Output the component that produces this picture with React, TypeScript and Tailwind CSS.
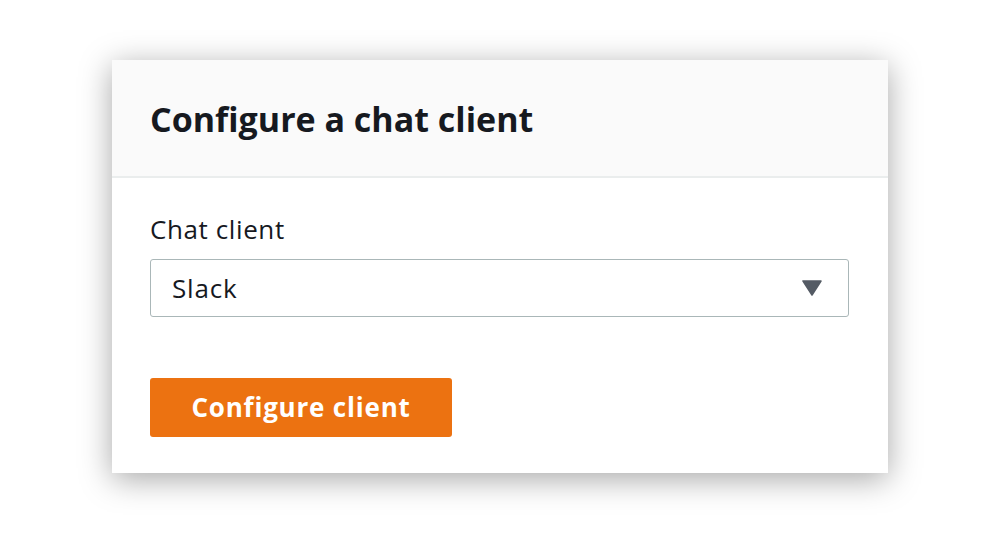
export default function App() {
  return (
    <div className="w-[1000px] h-[534px] bg-white pt-[60px] pl-[112px]" style={{ fontFamily: "'Open Sans', 'Noto Sans', sans-serif" }}>
      <div className="w-[776px] bg-white shadow-[0_6px_30px_rgba(0,0,0,0.35)]">
        <div className="h-[118px] bg-[#fafafa] border-b-2 border-[#eaeded] flex items-center pl-[38px]">
          <h1 className="text-[34px] font-bold text-[#16191f] leading-none pt-[2px]">Configure a chat client</h1>
        </div>
        <div className="px-[38px] pt-[36px] pb-[36px]">
          <div className="text-[26px] text-[#16191f] leading-[30px] tracking-[0.6px]">Chat client</div>
          <div className="mt-[15px] w-[699px] h-[58px] border border-[#aab7b8] rounded-[3px] flex items-center justify-between pl-[21px] pr-[26px]">
            <span className="text-[26px] text-[#16191f] tracking-[0.8px]">Slack</span>
            <svg width="20" height="16" viewBox="0 0 20 16">
              <path d="M1 1 L19 1 L10 15 Z" fill="#545b64" stroke="#545b64" strokeWidth="1.5" strokeLinejoin="round" />
            </svg>
          </div>
          <button className="mt-[61px] w-[302px] h-[59px] bg-[#ec7211] rounded-[3px] text-white text-[26px] font-bold tracking-[0.8px]">
            Configure client
          </button>
        </div>
      </div>
    </div>
  );
}
